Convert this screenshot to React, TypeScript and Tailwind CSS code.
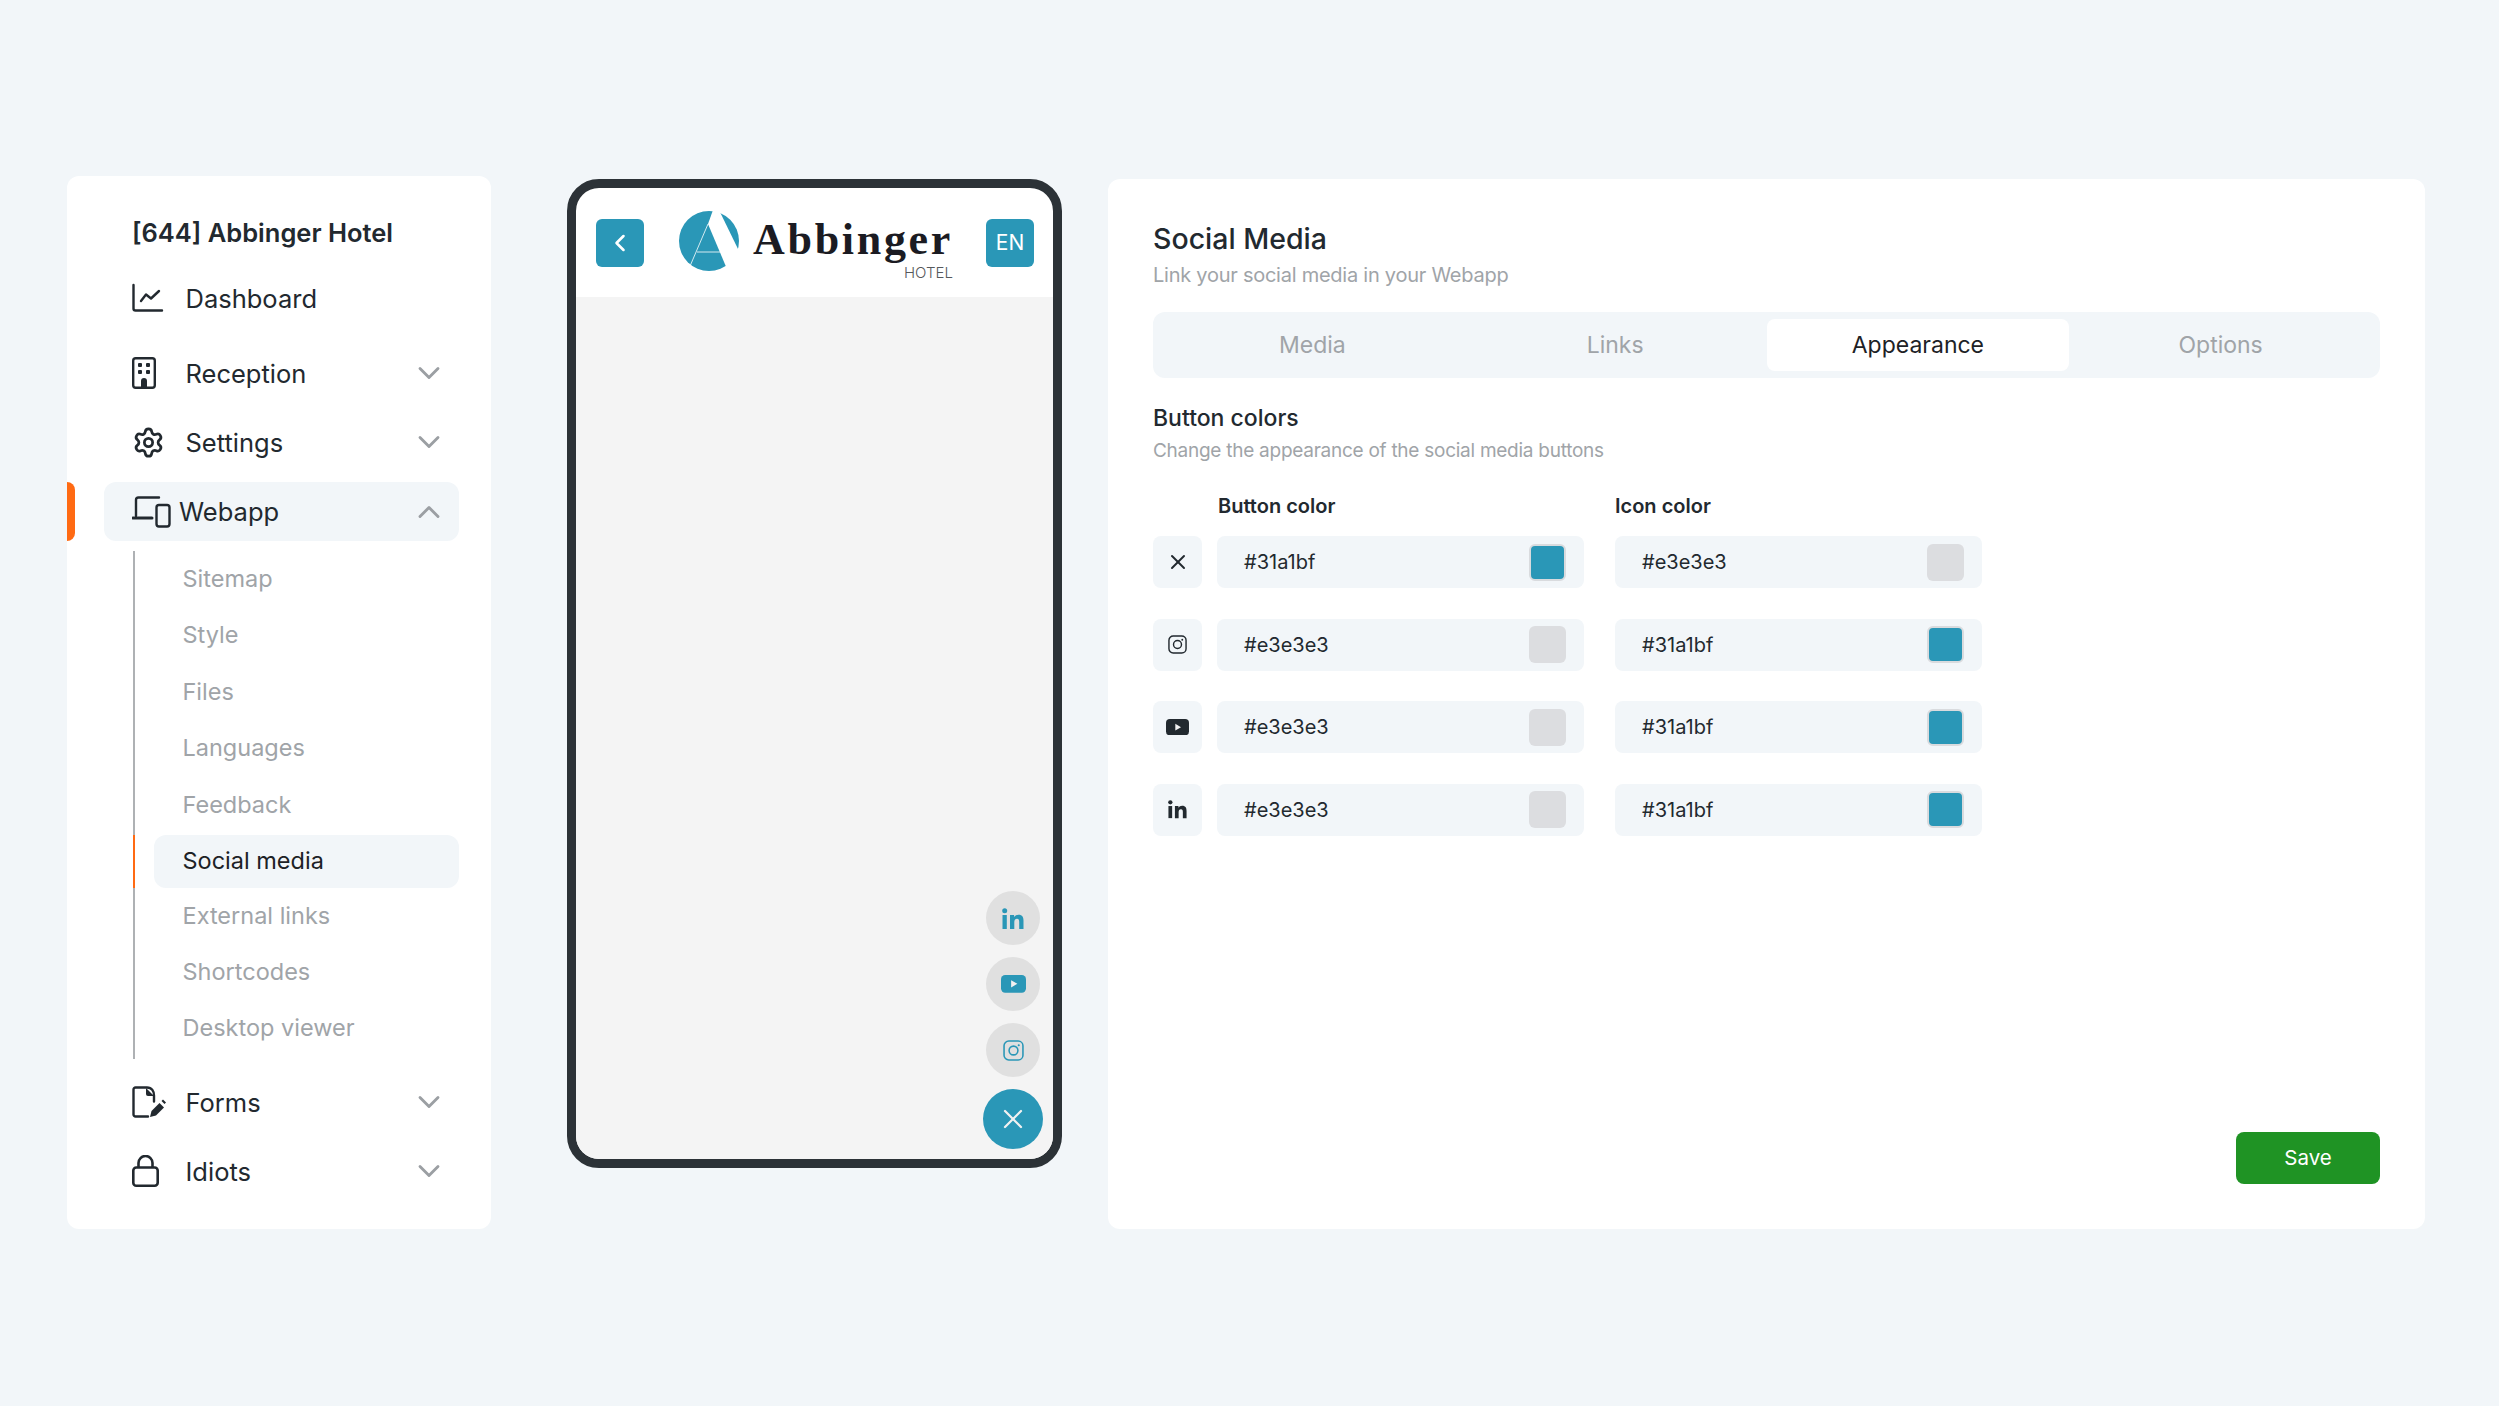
import React from "react";
import { ChevronDown, ChevronLeft, ChevronUp, Settings, X } from "lucide-react";

const TEAL = "#2a97b7";

const IconChart = () => (
  <svg width="32" height="30" viewBox="0 0 32 30" fill="none" stroke="#22292f" strokeWidth="2.4" strokeLinecap="round" strokeLinejoin="round">
    <path d="M1.500 2v23.500a2 2 0 0 0 2 2H30" />
    <path d="M9 18l5-6.500 5 4 8-7.500" />
  </svg>
);

const IconBuilding = () => (
  <svg width="24" height="32" viewBox="0 0 24 32" fill="none">
    <rect x="1.200" y="1.200" width="21.600" height="29.600" rx="2.500" stroke="#22292f" strokeWidth="2.400" />
    <rect x="6" y="6" width="4" height="4" rx="1" fill="#22292f" />
    <rect x="14" y="6" width="4" height="4" rx="1" fill="#22292f" />
    <rect x="6" y="13" width="4" height="4" rx="1" fill="#22292f" />
    <rect x="14" y="13" width="4" height="4" rx="1" fill="#22292f" />
    <path d="M9 30v-6a3 3 0 0 1 6 0v6z" fill="#22292f" />
  </svg>
);

const IconDevices = () => (
  <svg width="39" height="32" viewBox="0 0 39 32" fill="none" stroke="#22292f" strokeWidth="2.400" strokeLinecap="round" strokeLinejoin="round">
    <path d="M4 20V4a2.500 2.500 0 0 1 2.500-2.500H27" />
    <path d="M1 22h19" strokeWidth="3" />
    <rect x="24.500" y="9" width="13" height="21.500" rx="2.500" />
  </svg>
);

const IconFormPen = () => (
  <svg width="35" height="32" viewBox="0 0 35 32" fill="none" strokeLinecap="round" strokeLinejoin="round">
    <path d="M16 30.500H3.500a2 2 0 0 1-2-2v-25a2 2 0 0 1 2-2H15c5 0 7 4 7 8v6" stroke="#22292f" strokeWidth="2.400" />
    <path d="M14 2v6a2 2 0 0 0 2 2h6z" fill="#22292f" />
    <path d="M18 31l1.500-6 8-8 4.500 4.500-8 8z" fill="#22292f" />
    <path d="M29.500 15l1.500-1.500 3 3-1.500 1.500z" fill="#22292f" />
  </svg>
);

const IconLock = () => (
  <svg width="27" height="32" viewBox="0 0 27 32" fill="none" stroke="#22292f" strokeWidth="2.600" strokeLinejoin="round">
    <rect x="1.300" y="12.500" width="24.400" height="18.200" rx="3" />
    <path d="M6.500 12.500V8a7 7 0 0 1 14 0v4.500" />
  </svg>
);

const IconInstagram = ({ color, size }: { color: string; size: number }) => (
  <svg width={size} height={size} viewBox="0 0 20 20" fill="none" stroke={color} strokeWidth="1.500">
    <rect x="1" y="1" width="18" height="18" rx="4.500" />
    <circle cx="10" cy="10" r="4.200" />
    <circle cx="15" cy="5" r="1" fill={color} stroke="none" />
  </svg>
);

const IconYoutube = ({ color, width }: { color: string; width: number }) => (
  <svg width={width} viewBox="0 0 24 17" fill="none">
    <rect x="0" y="0" width="24" height="17" rx="4" fill={color} />
    <path d="M9.700 5l6 3.500-6 3.500z" fill="#f1f1f1" />
  </svg>
);

const IconLinkedin = ({ color, width }: { color: string; width: number }) => (
  <svg width={width} viewBox="0 0 22 21" fill={color}>
    <circle cx="2.700" cy="2.700" r="2.500" />
    <rect x="0.500" y="7" width="4.300" height="14" />
    <path d="M8 7h4.100v2c.8-1.400 2.400-2.300 4.300-2.300 4.200 0 5.100 2.700 5.100 6.400V21h-4.300v-7c0-1.800-.3-3.200-2.200-3.200s-2.700 1.400-2.700 3.300V21H8z" />
  </svg>
);

const NavRow = ({
  icon,
  label,
  mt,
  chevron = true,
}: {
  icon: React.ReactNode;
  label: string;
  mt: string;
  chevron?: boolean;
}) => (
  <div className={`flex h-10 items-center pl-[65px] pr-[44px] ${mt}`}>
    <div className="flex w-[53.500px] shrink-0 items-center">{icon}</div>
    <span className="flex-1 pt-0.5 text-[25.500px] text-[#22292f]">{label}</span>
    {chevron && <ChevronDown size={36} strokeWidth={1.900} className="text-[#9b9fa3]" />}
  </div>
);

const subItems = ["Sitemap", "Style", "Files", "Languages", "Feedback"];

const Sidebar = () => (
  <aside className="relative h-[1053px] w-[424px] shrink-0 rounded-xl bg-white">
    <div className="pl-[65px] pt-[41px] text-[25.500px] font-semibold leading-8 text-[#22292f]">[644] Abbinger Hotel</div>
    <NavRow icon={<IconChart />} label="Dashboard" mt="mt-[29px]" chevron={false} />
    <NavRow icon={<IconBuilding />} label="Reception" mt="mt-[35px]" />
    <NavRow icon={<Settings size={33} strokeWidth={2} className="text-[#22292f]" />} label="Settings" mt="mt-[29px]" />

    <div className="relative ml-[37px] mt-5 flex h-[59px] w-[355px] items-center rounded-xl bg-[#f2f6f9] pl-7 pr-[12px]">
      <div className="absolute -left-[37px] top-0 h-[59px] w-2 rounded-r-lg bg-[#ff6a13]" />
      <div className="flex w-[47px] shrink-0 items-center">
        <IconDevices />
      </div>
      <span className="flex-1 pt-0.5 text-[25.500px] text-[#22292f]">Webapp</span>
      <ChevronUp size={36} strokeWidth={1.900} className="text-[#9b9fa3]" />
    </div>

    <div className="ml-[66px] mt-2.5 flex w-[326px] flex-col border-l-2 border-[#aeb1b4] pb-1 pt-px">
      {subItems.map((s) => (
        <div key={s} className="mb-[3.500px] flex h-[53px] items-center pl-[47.500px] text-[23.500px] text-[#a0a4a8]">
          {s}
        </div>
      ))}
      <div className="relative ml-[19px] flex h-[53px] items-center rounded-xl bg-[#f2f6f9] pl-[28.500px] text-[23.500px] text-[#1d2226]">
        <div className="absolute -left-[21px] top-0 h-[53px] w-0.5 bg-[#ff6a13]" />
        Social media
      </div>
      <div className="mt-[1.500px] flex h-[53px] items-center pl-[47.500px] text-[23.500px] text-[#a0a4a8]">External links</div>
      <div className="mt-[3.500px] flex h-[53px] items-center pl-[47.500px] text-[23.500px] text-[#a0a4a8]">Shortcodes</div>
      <div className="mt-[3px] flex h-[53px] items-center pl-[47.500px] text-[23.500px] text-[#a0a4a8]">Desktop viewer</div>
    </div>

    <NavRow icon={<IconFormPen />} label="Forms" mt="mt-[23.500px]" />
    <NavRow icon={<IconLock />} label="Idiots" mt="mt-[29px]" />
  </aside>
);

const Bubble = ({ children }: { children: React.ReactNode }) => (
  <div className="flex h-[54px] w-[54px] items-center justify-center rounded-full bg-[#e0e0e0]">{children}</div>
);

const Phone = () => (
  <div className="mt-[3px] ml-[76px] flex h-[989px] w-[495px] shrink-0 flex-col overflow-hidden rounded-[32px] border-[9px] border-[#2c3237] bg-white">
    <header className="flex h-[109px] shrink-0 items-center pl-5 pr-[19px] pt-[1px]">
      <button className="flex h-12 w-12 items-center justify-center rounded-md text-white" style={{ backgroundColor: TEAL }}>
        <ChevronLeft size={28} strokeWidth={2.200} />
      </button>
      <div className="relative ml-[35px] -mt-[5px] flex flex-1 items-center">
        <svg width="60" height="60" viewBox="0 0 60 60" className="shrink-0">
          <circle cx="30" cy="30" r="30" fill={TEAL} />
          <path d="M34 -1L40 -1L62 44L48 58L29 13z" fill="#fff" />
          <path d="M29 13L11.500 54M18 41H41" stroke="#fff" strokeWidth="0.800" fill="none" />
        </svg>
        <span className="ml-[14px] -mt-[1px] font-['Liberation_Serif'] text-[44px] font-bold leading-none tracking-[2.700px] text-[#1b1b22]">
          Abbinger
        </span>
        <span className="absolute left-[225px] top-[54px] text-[15px] font-light leading-none text-[#55585b]">HOTEL</span>
      </div>
      <div className="flex h-12 w-12 items-center justify-center rounded-md text-[21px] text-white" style={{ backgroundColor: TEAL }}>
        EN
      </div>
    </header>
    <div className="flex flex-1 flex-col items-end justify-end bg-[#f4f4f4] pb-[10px] pr-[10px]">
      <div className="flex w-[60px] flex-col items-center gap-3">
        <Bubble>
          <IconLinkedin color={TEAL} width={22} />
        </Bubble>
        <Bubble>
          <IconYoutube color={TEAL} width={25} />
        </Bubble>
        <Bubble>
          <IconInstagram color={TEAL} size={21} />
        </Bubble>
        <div className="flex h-[60px] w-[60px] items-center justify-center rounded-full" style={{ backgroundColor: TEAL }}>
          <X size={32} strokeWidth={1.700} className="text-[#f1f1f1]" />
        </div>
      </div>
    </div>
  </div>
);

const tabs = ["Media", "Links", "Appearance", "Options"];

const ColorField = ({ value, teal }: { value: string; teal: boolean }) => (
  <div className="flex h-[52px] w-[367px] items-center rounded-lg bg-[#f2f6f9] pl-[27px] pr-[18px]">
    <span className="flex-1 text-[20px] text-[#22292f]">{value}</span>
    {teal ? (
      <div className="h-[37px] w-[37px] rounded-md border-2 border-[#d9dbde] bg-[#2a97b7]" />
    ) : (
      <div className="h-[37px] w-[37px] rounded-md bg-[#dcdde0]" />
    )}
  </div>
);

const rows = [
  { icon: <X size={24} strokeWidth={2} className="text-[#22292f]" />, button: "#31a1bf", iconColor: "#e3e3e3" },
  { icon: <IconInstagram color="#22292f" size={19} />, button: "#e3e3e3", iconColor: "#31a1bf" },
  { icon: <IconYoutube color="#22292f" width={23} />, button: "#e3e3e3", iconColor: "#31a1bf" },
  { icon: <IconLinkedin color="#22292f" width={19} />, button: "#e3e3e3", iconColor: "#31a1bf" },
];

const Panel = () => (
  <section className="mt-[3px] ml-[46px] flex h-[1050px] w-[1317px] shrink-0 flex-col rounded-xl bg-white px-[45px]">
    <h1 className="mt-[40px] text-[28.500px] font-medium leading-10 text-[#22292f]">Social Media</h1>
    <p className="mt-[2px] text-[20px] leading-7 tracking-[-0.250px] text-[#a0a4a8]">Link your social media in your Webapp</p>
    <div className="mt-[23px] grid h-[66px] grid-cols-4 rounded-xl bg-[#f2f6f9] px-2 py-[7px]">
      {tabs.map((t) => (
        <div
          key={t}
          className={
            t === "Appearance"
              ? "flex items-center justify-center rounded-lg bg-white text-[23px] text-[#1d2226]"
              : "flex items-center justify-center text-[23px] text-[#a0a4a8]"
          }
        >
          {t}
        </div>
      ))}
    </div>
    <h2 className="mt-[25px] text-[23px] font-medium leading-[30px] text-[#22292f]">Button colors</h2>
    <p className="mt-[4px] text-[19px] leading-7 tracking-[-0.260px] text-[#a0a4a8]">Change the appearance of the social media buttons</p>
    <div className="mt-[27px] flex pl-[65px] text-[20px] font-semibold leading-7 text-[#22292f]">
      <div className="w-[397px]">Button color</div>
      <div>Icon color</div>
    </div>
    <div className="mt-4 flex flex-col gap-[30.500px]">
      {rows.map((r, i) => (
        <div key={i} className="flex items-center">
          <div className="mr-[15px] flex h-[52px] w-[49px] items-center justify-center rounded-lg bg-[#f2f6f9]">{r.icon}</div>
          <ColorField value={r.button} teal={r.button === "#31a1bf"} />
          <div className="w-[31px]" />
          <ColorField value={r.iconColor} teal={r.iconColor === "#31a1bf"} />
        </div>
      ))}
    </div>
    <div className="mb-[45px] mt-auto flex justify-end">
      <button className="h-[52px] w-[144px] rounded-lg bg-[#1f9324] text-[20.500px] text-white">Save</button>
    </div>
  </section>
);

export default function App() {
  return (
    <div className="flex h-[1406px] w-full items-start bg-[#f2f6f9] pl-[67px] pt-[176px] font-['Inter',sans-serif]">
      <Sidebar />
      <Phone />
      <Panel />
    </div>
  );
}
